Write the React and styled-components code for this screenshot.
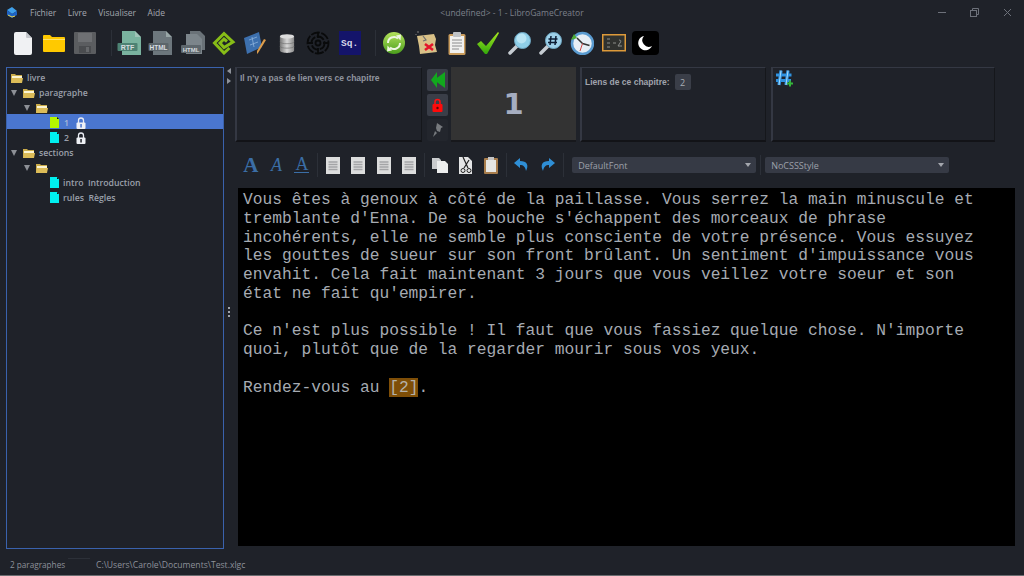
import React from "react";
import styled, { createGlobalStyle } from "styled-components";

const Global = createGlobalStyle`
  html, body { margin: 0; padding: 0; background: #1f2229; overflow: hidden; }
  * { box-sizing: border-box; }
`;

const Window = styled.div`
  width: 1024px;
  height: 576px;
  background: #1f2229;
  display: flex;
  flex-direction: column;
  font-family: "Open Sans", "Liberation Sans", sans-serif;
  color: #9a9fa9;
  border-bottom: 1px solid #6a6c70;
  overflow: hidden;
`;

const TitleBar = styled.div`
  height: 25px;
  flex: none;
  display: grid;
  grid-template-columns: 1fr auto 1fr;
  align-items: center;
  padding-left: 6px;
`;

const TitleLeft = styled.div`
  display: flex;
  align-items: center;
`;

const Menu = styled.div`
  display: flex;
  gap: 11.5px;
  margin-left: 12px;
  font-size: 8.5px;
  color: #a3a7af;
`;

const Title = styled.div`
  font-size: 8.5px;
  color: #7c808a;
  padding-right: 6px;
`;

const WinButtons = styled.div`
  display: flex;
  align-items: center;
  justify-content: flex-end;
  gap: 24px;
  margin-right: 12px;
`;

const Toolbar = styled.div`
  height: 34px;
  flex: none;
  display: flex;
  align-items: center;
  padding: 2px 0 0 7px;
`;

const ToolBtn = styled.div`
  width: 31.4px;
  height: 28px;
  flex: none;
  display: flex;
  align-items: center;
  justify-content: center;
`;

const ToolSep = styled.div`
  width: 1px;
  height: ${(p) => p.$h || 26}px;
  margin: 0 ${(p) => p.$mr ?? 2}px 0 ${(p) => p.$ml ?? 10}px;
  flex: none;
  background: #2c3038;
`;

const Body = styled.div`
  flex: 1;
  min-height: 0;
  display: flex;
  padding: 8px 9px 0 6px;
`;

const Tree = styled.div`
  width: 218px;
  height: 482px;
  flex: none;
  border: 1px solid #3a62ad;
  padding-top: 1px;
  font-size: 8.7px;
  font-weight: 600;
  color: #9ba0ab;
`;

const Row = styled.div`
  height: 15px;
  display: flex;
  align-items: center;
  padding-top: 2px;
  padding-left: ${(p) => p.$indent}px;
  background: ${(p) => (p.$selected ? "#4a76cf" : "transparent")};
  color: ${(p) => (p.$selected ? "#a9b8d8" : "inherit")};
  white-space: pre;
`;

const Caret = styled.span`
  width: 0;
  height: 0;
  flex: none;
  border-left: 3.5px solid transparent;
  border-right: 3.5px solid transparent;
  border-top: 6px solid #8d9096;
  margin-right: 6px;
`;

const RowLabel = styled.span`
  margin-left: ${(p) => p.$m || 4}px;
`;

const Splitter = styled.div`
  width: 10px;
  flex: none;
  display: flex;
  flex-direction: column;
  align-items: center;
  padding-top: 1px;
  gap: 4px;
`;

const ArrowLeft = styled.span`
  width: 0;
  height: 0;
  border-top: 3px solid transparent;
  border-bottom: 3px solid transparent;
  border-right: 4px solid #8e929a;
`;

const ArrowRight = styled.span`
  width: 0;
  height: 0;
  border-top: 3px solid transparent;
  border-bottom: 3px solid transparent;
  border-left: 4px solid #8e929a;
`;

const Dots = styled.div`
  margin-top: 219px;
  display: flex;
  flex-direction: column;
  gap: 2px;
  span {
    width: 2px;
    height: 2px;
    background: #a0a4ab;
  }
`;

const Main = styled.div`
  flex: 1;
  min-width: 0;
  display: flex;
  flex-direction: column;
`;

const TopRow = styled.div`
  height: 75px;
  flex: none;
  display: flex;
  padding-left: 1px;
`;

const Panel = styled.div`
  width: ${(p) => p.$w}px;
  flex: none;
  margin-right: 5px;
  border-style: solid;
  border-color: #343843 #15171b #121317 #343843;
  border-width: 1px 1px 2px 2px;
  padding: 5px 3px;
  font-family: "Liberation Sans", sans-serif;
  font-size: 8.5px;
  font-weight: 700;
  color: #8f949e;
`;

const SideButtons = styled.div`
  width: 21px;
  flex: none;
  margin-right: 3px;
  display: flex;
  flex-direction: column;
  gap: 3px;
  padding-top: 2px;
`;

const SideBtn = styled.div`
  height: 22px;
  border-radius: 2px;
  background: ${(p) => (p.$off ? "#23262d" : "#3a3e48")};
  display: flex;
  align-items: center;
  justify-content: center;
`;

const NumberPanel = styled.div`
  width: 125px;
  flex: none;
  margin-right: 4px;
  background: #333333;
  border-bottom: 2px solid #17181c;
  display: flex;
  align-items: center;
  justify-content: center;
  font-family: "DejaVu Sans", sans-serif;
  font-weight: 700;
  font-size: 29px;
  color: #a5adc0;
`;

const LinksHead = styled.div`
  display: flex;
  align-items: center;
  gap: 5px;
  padding-top: 1px;
  color: #a0a4ad;
`;

const HashWrap = styled.div`
  margin-top: -3px;
`;

const Badge = styled.span`
  width: 16px;
  height: 16px;
  border-radius: 2px;
  background: #3a3e48;
  display: flex;
  align-items: center;
  justify-content: center;
  font-family: "Open Sans", sans-serif;
  font-size: 9px;
  font-weight: 400;
  color: #a9adb5;
`;

const FormatBar = styled.div`
  height: 46px;
  flex: none;
  display: flex;
  align-items: center;
  padding-left: 4px;
`;

const FmtBtn = styled.div`
  width: 25.6px;
  height: 24px;
  flex: none;
  display: flex;
  align-items: center;
  justify-content: center;
`;

const FontA = styled.span`
  font-family: "Liberation Serif", serif;
  font-size: ${(p) => (p.$bold ? 21 : 18)}px;
  font-weight: ${(p) => (p.$bold ? 700 : 400)};
  font-style: ${(p) => (p.$italic ? "italic" : "normal")};
  line-height: ${(p) => (p.$under ? 15 : 18)}px;
  padding: 0 ${(p) => (p.$under ? 1 : 0)}px;
  border-bottom: ${(p) => (p.$under ? "1px solid #3b6ea6" : "none")};
  color: #3b6ea6;
`;

const Combo = styled.div`
  width: 184px;
  height: 16px;
  flex: none;
  border-radius: 2px;
  background: #363a45;
  display: flex;
  align-items: center;
  justify-content: space-between;
  padding: 0 5px 0 6px;
  font-size: 9px;
  color: #9da1aa;
`;

const ComboArrow = styled.span`
  width: 0;
  height: 0;
  border-left: 3px solid transparent;
  border-right: 3px solid transparent;
  border-top: 4px solid #a4a7ae;
`;

const Editor = styled.div`
  width: 777px;
  height: 358px;
  flex: none;
  margin-left: 4px;
  background: #000;
  padding: 3px 5px;
  font-family: "Liberation Mono", "Courier New", monospace;
  font-size: 16.24px;
  color: #a6abb2;
`;

const Line = styled.div`
  height: 18.76px;
  line-height: 18.76px;
  white-space: pre;
`;

const LinkText = styled.span`
  background: #7e4e07;
  color: #b5b2aa;
`;

const Status = styled.div`
  height: 28px;
  flex: none;
  display: flex;
  align-items: center;
  padding: 7px 0 0 10px;
  font-size: 8.6px;
  color: #8d919a;
`;

const StatusLeft = styled.div`
  width: 58px;
  font-size: 8.2px;
  white-space: nowrap;
`;

const StatusGap = styled.div`
  width: 22px;
  height: 1px;
  margin: -13px 6px 0 0;
  background: #2c3038;
`;

const Page = () => (
  <svg width="18" height="23" viewBox="0 0 18 23">
    <path d="M0 2q0-2 2-2h10l6 6v15q0 2-2 2H2q-2 0-2-2z" fill="#f0f1f3" />
    <path d="M12 0l6 6h-5q-1 0-1-1z" fill="#c4c7cc" />
  </svg>
);

const Folder = () => (
  <svg width="22" height="18" viewBox="0 0 22 18">
    <path d="M0 2q0-1 1-1h6l2 2h12q1 0 1 1v13q0 1-1 1H1q-1 0-1-1z" fill="#ffc900" />
    <path d="M0 5h22v1H0z" fill="#ffe36a" />
  </svg>
);

const Floppy = () => (
  <svg width="22" height="22" viewBox="0 0 22 22">
    <path d="M0 1q0-1 1-1h20q1 0 1 1v20q0 1-1 1H1q-1 0-1-1z" fill="#5b5d60" />
    <rect x="4" y="1" width="14" height="9" fill="#6e7073" />
    <rect x="5" y="14" width="12" height="7" fill="#4a4c4f" />
    <rect x="12" y="15" width="3" height="5" fill="#66686b" />
  </svg>
);

const DocBadge = ({ color, badge, label, size = 7 }) => (
  <svg width="26" height="26" viewBox="0 0 26 26">
    <path d="M5 1h13l6 6v18H5z" fill={color} />
    <path d="M18 1l6 6h-6z" fill="#c5d6d2" opacity="0.5" />
    <rect x="0.500" y="13" width="20" height="8" rx="1" fill={badge} />
    <text x="10.500" y="19.500" textAnchor="middle" fontFamily="Liberation Sans" fontWeight="700" fontSize={size} fill="#d8dde0">
      {label}
    </text>
  </svg>
);

const DocStack = () => (
  <svg width="26" height="24" viewBox="0 0 26 24">
    <path d="M10 0h10l5 5v14H10z" fill="#6a7278" />
    <path d="M6 3h11l5 5v15H6z" fill="#7c858b" />
    <rect x="1" y="14" width="20" height="8" rx="1" fill="#5e676d" />
    <text x="11" y="20.500" textAnchor="middle" fontFamily="Liberation Sans" fontWeight="700" fontSize="6" fill="#d5dade">
      HTML
    </text>
  </svg>
);

const Epub = () => (
  <svg width="24" height="24" viewBox="0 0 24 24">
    <path d="M17.500 17L12 22 2.500 12 12 2.500l9 8.500-9 5.500-4-4.500 4-4 3 2.500" fill="none" stroke="#87bd17" strokeWidth="3" strokeLinejoin="miter" />
  </svg>
);

const Blueprint = () => (
  <svg width="24" height="24" viewBox="0 0 24 24">
    <path d="M1 7l15-6 3 15-15 7z" fill="#3d70ae" />
    <path d="M6 9l8-3M7 14l8-3M9 6l2 10" stroke="#8db2dc" strokeWidth="0.800" />
    <path d="M23 9L15 22l-1 1 0-3 7-12z" fill="#dd9d4b" />
  </svg>
);

const Database = () => (
  <svg width="16" height="21" viewBox="0 0 18 22">
    <defs>
      <linearGradient id="dbg" x1="0" x2="1" y1="0" y2="0">
        <stop offset="0" stopColor="#777" />
        <stop offset="0.5" stopColor="#d8d8d8" />
        <stop offset="1" stopColor="#8a8a8a" />
      </linearGradient>
    </defs>
    <path d="M1 3v16c0 3.500 16 3.500 16 0V3z" fill="url(#dbg)" />
    <ellipse cx="9" cy="3" rx="8" ry="2.500" fill="#ddd" />
    <path d="M1 9c0 3 16 3 16 0M1 14c0 3 16 3 16 0" fill="none" stroke="#6e6e6e" strokeWidth="0.700" />
  </svg>
);

const Target = () => (
  <svg width="24" height="24" viewBox="0 0 24 24" fill="none" stroke="#090a0b" strokeWidth="1.800">
    <circle cx="12" cy="12" r="10.500" strokeDasharray="9 1.500" />
    <circle cx="12" cy="12" r="6.500" strokeDasharray="8 1.500" />
    <circle cx="12" cy="12" r="2.500" />
    <path d="M12 1v6M12 17v6M1 12h6M17 12h6" />
  </svg>
);

const SqBox = styled.div`
  width: 22px;
  height: 24px;
  background: #14146a;
  display: flex;
  align-items: center;
  justify-content: center;
  font-family: "Liberation Mono", monospace;
  font-weight: 700;
  font-size: 9.5px;
  color: #d8d8e8;
`;

const Refresh = () => (
  <svg width="24" height="24" viewBox="0 0 24 24">
    <defs>
      <linearGradient id="rfg" x1="0" x2="0" y1="0" y2="1">
        <stop offset="0" stopColor="#b4e25c" />
        <stop offset="1" stopColor="#4a9e1c" />
      </linearGradient>
    </defs>
    <circle cx="12" cy="12" r="11" fill="url(#rfg)" />
    <path d="M6 12a6 6 0 0 1 10-4.500" fill="none" stroke="#eef6e0" strokeWidth="2" />
    <path d="M18 12a6 6 0 0 1-10 4.500" fill="none" stroke="#eef6e0" strokeWidth="2" />
    <path d="M14 4.500l4.500 5 .5-6zM10 19.500l-4.500-5-.5 6z" fill="#eef6e0" />
  </svg>
);

const MapIcon = () => (
  <svg width="25" height="24" viewBox="0 0 25 24">
    <path d="M4 5l17-2 2 5-1 6 2 7-17 2-1-8z" fill="#d9c187" />
    <path d="M10 5l3 4-3 1M5 0v2M3 3v1" stroke="#6f6f6f" strokeWidth="1.200" fill="none" />
    <path d="M12 13l8 6M20 13l-8 6" stroke="#e3152a" strokeWidth="2.600" />
  </svg>
);

const Clipboard = () => (
  <svg width="18" height="24" viewBox="0 0 18 24">
    <rect x="0.500" y="3" width="17" height="21" rx="1.500" fill="#c99c5c" />
    <rect x="2" y="5" width="14" height="17" fill="#f1f1ef" />
    <rect x="5" y="1" width="8" height="5" rx="1" fill="#bfc2c5" />
    <path d="M4 9h10M4 12h10M4 15h10M4 18h7" stroke="#8c8c8c" />
  </svg>
);

const Check = () => (
  <svg width="24" height="24" viewBox="0 0 24 24">
    <defs>
      <linearGradient id="ckg" x1="0" x2="0" y1="0" y2="1">
        <stop offset="0" stopColor="#a9e820" />
        <stop offset="1" stopColor="#32a80c" />
      </linearGradient>
    </defs>
    <path d="M1 13l4-3 5 5L22 1l1 1-12 21h-2z" fill="url(#ckg)" />
  </svg>
);

const Lens = ({ hash }) => (
  <svg width="24" height="24" viewBox="0 0 24 24">
    <path d="M9 15L2 22" stroke="#c6ccd2" strokeWidth="3.500" strokeLinecap="round" />
    <circle cx="14.500" cy="9.500" r="8" fill={hash ? "#9ed1ea" : "#8fcfe8"} stroke="#6fa8c4" />
    <circle cx="13.500" cy="7.500" r="5" fill="#c9ecf8" opacity={hash ? 0 : 0.7} />
    {hash && <path d="M12 5l-1 9M17 5l-1 9M9.500 8h9M9 11.500h9" stroke="#0c1c33" strokeWidth="1.500" />}
  </svg>
);

const Clock = () => (
  <svg width="24" height="24" viewBox="0 0 24 24">
    <circle cx="12.500" cy="12.500" r="10.500" fill="#e6eef5" stroke="#5a9bd0" strokeWidth="2.500" />
    <path d="M12.500 12.500L7 7M12.500 12.500l7 2" stroke="#333" strokeWidth="1.500" />
    <path d="M12.500 12.500L10 20" stroke="#d04545" />
    <path d="M1 9l3-6 3 4z" fill="#4eaa35" />
  </svg>
);

const Board = () => (
  <svg width="24" height="18" viewBox="0 0 24 18">
    <rect x="0.750" y="0.750" width="22.500" height="16" fill="#30322f" stroke="#dd9a3a" strokeWidth="1.500" />
    <path d="M5 5h3M5 9h3M5 13h3M11 9h3M17 6q3 0 1 3l-2 3h4" stroke="#8d8f8b" fill="none" />
  </svg>
);

const MoonBox = styled.div`
  width: 27px;
  height: 24px;
  border-radius: 4px;
  background: #000;
  display: flex;
  align-items: center;
  justify-content: center;
`;

const Moon = () => (
  <svg width="16" height="16" viewBox="0 0 16 16">
    <path d="M7 1a7.200 7.200 0 1 0 8 10A6.500 6.500 0 0 1 7 1z" fill="#fff" />
  </svg>
);

const AppLogo = () => (
  <svg width="12" height="12" viewBox="0 0 12 12" style={{ flex: "none" }}>
    <path d="M1 3l5-3 5 4-5 3z" fill="#3fa0ea" />
    <path d="M1 3v5l5 3 5-3V4L6 7z" fill="#1c62c4" />
    <path d="M2 8l4 2 3-1" stroke="#e8d44a" fill="none" />
  </svg>
);

const TreeFolder = () => (
  <svg width="12" height="10" viewBox="0 0 12 10" style={{ flex: "none" }}>
    <path d="M0 1h4l1 1h6v8H0z" fill="#c9ab4a" />
    <path d="M1 3h10v3H1z" fill="#fbf4d2" />
    <path d="M0 10l1-5h11l-1 5z" fill="#dcbc58" />
  </svg>
);

const Leaf = ({ color }) => (
  <svg width="9" height="11" viewBox="0 0 9 11" style={{ flex: "none" }}>
    <path d="M0 0h7l2 2v9H0z" fill={color} />
    <path d="M7 0l2 2H7z" fill="#111" />
  </svg>
);

const Lock = ({ light }) => (
  <svg width="10" height="12" viewBox="0 0 10 12" style={{ flex: "none", marginLeft: 7 }}>
    <path d="M2.500 6V3.500a2.500 2.500 0 0 1 5 0V6" fill="none" stroke="#e8ebf2" strokeWidth="1.300" />
    <rect x="0.500" y="5.500" width="9" height="6.500" rx="1" fill="#eef0f5" />
    <rect x="4.300" y="7" width="1.500" height="3.500" fill={light ? "#4a76cf" : "#1f2229"} />
  </svg>
);

const GreenBack = () => (
  <svg width="14" height="16" viewBox="0 0 14 16">
    <path d="M6 0v16L0 8zM14 0v16L3 8z" fill="#12a81d" />
  </svg>
);

const RedLock = () => (
  <svg width="11" height="14" viewBox="0 0 11 14">
    <path d="M3 6V4a2.500 2.500 0 0 1 5 0v2" fill="none" stroke="#ff1010" strokeWidth="1.500" />
    <rect x="0.500" y="6" width="10" height="8" rx="1" fill="#ff0a0a" />
    <circle cx="5.500" cy="10" r="1.200" fill="#5a0808" />
  </svg>
);

const Pin = () => (
  <svg width="11" height="14" viewBox="0 0 11 14">
    <path d="M5 0l6 4-2 1-1 4-3-1-1-3zM3 8l2 2-4 4z" fill="#777a7e" />
  </svg>
);

const HashPlus = () => (
  <svg width="17" height="17" viewBox="0 0 17 17" style={{ display: "block" }}>
    <path d="M5 0.500L3 15M12 0.500L10 15M0 5h15.500M0 10.500h15" stroke="#2f92e0" strokeWidth="3.200" fill="none" />
    <path d="M5 0.500L3 15M12 0.500L10 15" stroke="#a8dcf8" strokeWidth="1" fill="none" />
    <path d="M11 13.500h6M14 10.500v6" stroke="#35b53a" strokeWidth="2" />
  </svg>
);

const AlignPage = () => (
  <svg width="14" height="17" viewBox="0 0 14 17">
    <rect width="14" height="17" fill="#dcdddd" />
    <path d="M2.500 5h9M2.500 7.500h9M2.500 10h9M2.500 12.500h9" stroke="#a3a4a6" strokeWidth="1.400" />
  </svg>
);

const CopyIcon = () => (
  <svg width="16" height="15" viewBox="0 0 16 15">
    <path d="M0 0h7l2 2v9H0z" fill="#c9cbcd" />
    <path d="M5 3h8l3 3v9H5z" fill="#eceded" />
  </svg>
);

const CutIcon = () => (
  <svg width="14" height="17" viewBox="0 0 14 17">
    <path d="M0 0h9l4 4v13H0z" fill="#e4e5e6" />
    <path d="M4 0l5 11M10 3L5 11" stroke="#222" strokeWidth="1.200" />
    <circle cx="4" cy="13.500" r="2" fill="none" stroke="#222" />
    <circle cx="10" cy="13.500" r="2" fill="none" stroke="#222" />
  </svg>
);

const PasteIcon = () => (
  <svg width="14" height="17" viewBox="0 0 14 17">
    <rect y="1" width="14" height="16" rx="1" fill="#a87d4c" />
    <rect x="2" y="3" width="10" height="12" fill="#e6e6e3" />
    <rect x="4" width="6" height="3" fill="#c4c4c4" />
  </svg>
);

const UndoIcon = ({ flip }) => (
  <svg width="15" height="14" viewBox="0 0 15 14" style={flip ? { transform: "scaleX(-1)" } : undefined}>
    <path d="M6 0L0 5l6 5V7c3 0 5 1 6 6 3-6 1-10-6-10z" fill="#2f8fd6" />
  </svg>
);

const WinMin = () => <svg width="8" height="2" viewBox="0 0 8 2"><rect width="8" height="1" fill="#6d717a" /></svg>;
const WinMax = () => (
  <svg width="9" height="9" viewBox="0 0 9 9" fill="none" stroke="#6d717a">
    <rect x="0.500" y="2.500" width="6" height="6" />
    <path d="M2.500 2.500v-2h6v6h-2" />
  </svg>
);
const WinClose = () => (
  <svg width="9" height="9" viewBox="0 0 9 9" stroke="#6d717a">
    <path d="M1 1l7 7M8 1L1 8" />
  </svg>
);

const mainTools = [
  [<Page key="a" />, <Folder key="b" />, <Floppy key="c" />],
  [
    <DocBadge key="a" color="#7ab39f" badge="#4d8273" label="RTF" />,
    <DocBadge key="b" color="#6d777d" badge="#5c656b" label="HTML" size={6.500} />,
    <DocStack key="c" />,
    <Epub key="d" />,
    <Blueprint key="e" />,
    <Database key="f" />,
    <Target key="g" />,
    <SqBox key="h">Sq.</SqBox>,
  ],
  [
    <Refresh key="a" />,
    <MapIcon key="b" />,
    <Clipboard key="c" />,
    <Check key="d" />,
    <Lens key="e" />,
    <Lens key="f" hash />,
    <Clock key="g" />,
    <Board key="h" />,
    <MoonBox key="i"><Moon /></MoonBox>,
  ],
];

const editorLines = [
  "Vous êtes à genoux à côté de la paillasse. Vous serrez la main minuscule et",
  "tremblante d'Enna. De sa bouche s'échappent des morceaux de phrase",
  "incohérents, elle ne semble plus consciente de votre présence. Vous essuyez",
  "les gouttes de sueur sur son front brûlant. Un sentiment d'impuissance vous",
  "envahit. Cela fait maintenant 3 jours que vous veillez votre soeur et son",
  "état ne fait qu'empirer.",
  "",
  "Ce n'est plus possible ! Il faut que vous fassiez quelque chose. N'importe",
  "quoi, plutôt que de la regarder mourir sous vos yeux.",
  "",
];

export default function App() {
  return (
    <Window>
      <Global />
      <TitleBar>
        <TitleLeft>
          <AppLogo />
          <Menu>
            <span>Fichier</span>
            <span>Livre</span>
            <span>Visualiser</span>
            <span>Aide</span>
          </Menu>
        </TitleLeft>
        <Title>{"<undefined> - 1 - LibroGameCreator"}</Title>
        <WinButtons>
          <WinMin />
          <WinMax />
          <WinClose />
        </WinButtons>
      </TitleBar>

      <Toolbar>
        {mainTools.map((group, i) => (
          <React.Fragment key={i}>
            {i > 0 && <ToolSep />}
            {group.map((icon, j) => (
              <ToolBtn key={j}>{icon}</ToolBtn>
            ))}
          </React.Fragment>
        ))}
      </Toolbar>

      <Body>
        <Tree>
          <Row $indent={4}>
            <TreeFolder />
            <RowLabel>livre</RowLabel>
          </Row>
          <Row $indent={4}>
            <Caret />
            <TreeFolder />
            <RowLabel>paragraphe</RowLabel>
          </Row>
          <Row $indent={17}>
            <Caret />
            <TreeFolder />
          </Row>
          <Row $indent={43} $selected>
            <Leaf color="#b6f500" />
            <RowLabel $m={5}>1</RowLabel>
            <Lock light />
          </Row>
          <Row $indent={43}>
            <Leaf color="#00f0f0" />
            <RowLabel $m={5}>2</RowLabel>
            <Lock />
          </Row>
          <Row $indent={4}>
            <Caret />
            <TreeFolder />
            <RowLabel>sections</RowLabel>
          </Row>
          <Row $indent={17}>
            <Caret />
            <TreeFolder />
          </Row>
          <Row $indent={43}>
            <Leaf color="#00f0f0" />
            <RowLabel>{"intro  Introduction"}</RowLabel>
          </Row>
          <Row $indent={43}>
            <Leaf color="#00f0f0" />
            <RowLabel>{"rules  Règles"}</RowLabel>
          </Row>
        </Tree>

        <Splitter>
          <ArrowLeft />
          <ArrowRight />
          <Dots>
            <span />
            <span />
            <span />
          </Dots>
        </Splitter>

        <Main>
          <TopRow>
            <Panel $w={187}>Il n'y a pas de lien vers ce chapitre</Panel>
            <SideButtons>
              <SideBtn><GreenBack /></SideBtn>
              <SideBtn><RedLock /></SideBtn>
              <SideBtn $off><Pin /></SideBtn>
            </SideButtons>
            <NumberPanel>1</NumberPanel>
            <Panel $w={186}>
              <LinksHead>
                Liens de ce chapitre:
                <Badge>2</Badge>
              </LinksHead>
            </Panel>
            <Panel $w={224}>
              <HashWrap>
                <HashPlus />
              </HashWrap>
            </Panel>
          </TopRow>

          <FormatBar>
            <FmtBtn><FontA $bold>A</FontA></FmtBtn>
            <FmtBtn><FontA $italic>A</FontA></FmtBtn>
            <FmtBtn><FontA $under>A</FontA></FmtBtn>
            <ToolSep $h={24} $ml={2} />
            <FmtBtn><AlignPage /></FmtBtn>
            <FmtBtn><AlignPage /></FmtBtn>
            <FmtBtn><AlignPage /></FmtBtn>
            <FmtBtn><AlignPage /></FmtBtn>
            <ToolSep $h={24} $ml={2} />
            <FmtBtn><CopyIcon /></FmtBtn>
            <FmtBtn><CutIcon /></FmtBtn>
            <FmtBtn><PasteIcon /></FmtBtn>
            <ToolSep $h={24} $ml={2} />
            <FmtBtn><UndoIcon /></FmtBtn>
            <FmtBtn><UndoIcon flip /></FmtBtn>
            <ToolSep $h={24} $ml={3} $mr={8} />
            <Combo>
              DefaultFont
              <ComboArrow />
            </Combo>
            <ToolSep $h={20} $ml={4} $mr={4} />
            <Combo>
              NoCSSStyle
              <ComboArrow />
            </Combo>
          </FormatBar>

          <Editor>
            {editorLines.map((line, i) => (
              <Line key={i}>{line}</Line>
            ))}
            <Line>
              Rendez-vous au <LinkText>[2]</LinkText>.
            </Line>
          </Editor>
        </Main>
      </Body>

      <Status>
        <StatusLeft>2 paragraphes</StatusLeft>
        <StatusGap />
        <span>C:\Users\Carole\Documents\Test.xlgc</span>
      </Status>
    </Window>
  );
}
